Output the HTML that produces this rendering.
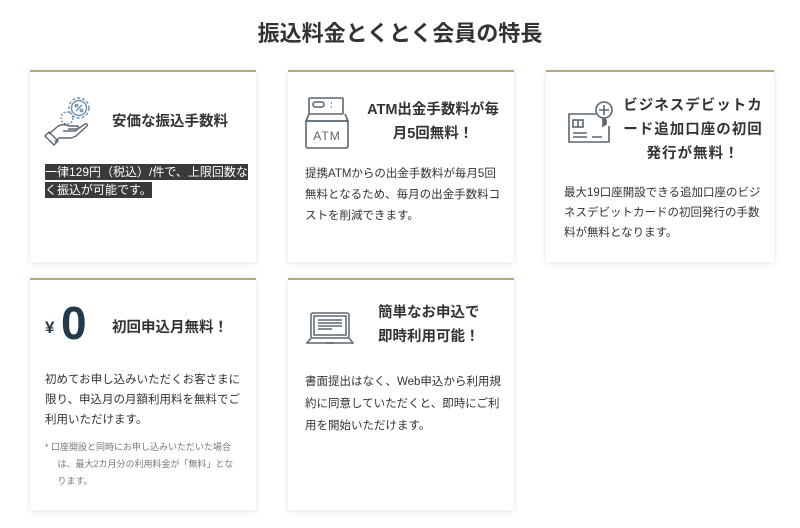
<!DOCTYPE html>
<html><head><meta charset="utf-8"><style>
*{margin:0;padding:0;box-sizing:border-box}
body{width:800px;height:528px;background:#fff;font-family:"Liberation Sans","Noto Sans CJK JP",sans-serif;color:#333;position:relative;overflow:hidden}
h1{position:absolute;top:16px;left:0;width:800px;text-align:center;font-size:22px;font-weight:bold;color:#333}
.card{position:absolute;background:#fff;border-top:2px solid #b9a87f;box-shadow:0 1px 6px rgba(0,0,0,.12)}
.t{position:absolute;font-size:14.5px;font-weight:bold;line-height:24px;color:#333}
.b{position:absolute;font-size:11.5px;line-height:21px;color:#333;white-space:nowrap}
.hl span{background:#3a3a3a;color:#fff;padding:1px 0}
.n{position:absolute;font-size:9px;line-height:17px;color:#777;white-space:nowrap}
svg{position:absolute}
</style></head><body>
<h1>振込料金とくとく会員の特長</h1>

<div class="card" style="left:30px;top:70px;width:226px;height:192px">
<svg style="left:13px;top:24px" width="56" height="50" viewBox="0 0 56 50" fill="none" stroke="#5b6670" stroke-width="1.4">
<circle cx="36" cy="12" r="7.5" stroke="#6a8fb0"/><circle cx="36" cy="12" r="10" stroke="#6a8fb0" stroke-dasharray="3 2"/>
<path d="M33 15l6-6" stroke="#6a8fb0"/><circle cx="33.5" cy="9.5" r="1.2" stroke="#6a8fb0"/><circle cx="38.5" cy="14.5" r="1.2" stroke="#6a8fb0"/>
<circle cx="24" cy="22" r="6" stroke="#6a8fb0" stroke-dasharray="2 1.5"/>
<path d="M6 38l8-7c4-3 8-3 12-1h8c2 0 2 3 0 3h-9M20 35h12l10-7c2-1 3 1 2 2l-11 10c-2 1-4 2-6 2H16l-4 4"/>
<path d="M2 40l9 9l4-4l-9-9z"/>
</svg>
<div class="t" style="left:82px;top:38px">安価な振込手数料</div>
<div class="b hl" style="left:15px;top:91px;line-height:18px;font-size:12px"><span>一律129円（税込）/件で、上限回数な</span><br><span>く振込が可能です。</span></div>
</div>

<div class="card" style="left:288px;top:70px;width:226px;height:192px">
<svg style="left:16px;top:24px" width="48" height="54" viewBox="0 0 48 54" fill="none" stroke="#5b6670" stroke-width="1.6">
<rect x="5" y="2" width="34" height="16" rx="1"/><rect x="9" y="6" width="11" height="5" rx="2.5"/><path d="M27 7h1M27 11h1"/>
<path d="M5 18l-3 7h42l-3-7"/><rect x="2" y="25" width="42" height="27" rx="2"/>
<text x="23" y="44" font-size="12" fill="#5b6670" stroke="none" text-anchor="middle" font-family="Liberation Sans" letter-spacing="1">ATM</text>
</svg>
<div class="t" style="left:70px;top:26px;width:150px;text-align:center">ATM出金手数料が毎<br>月5回無料！</div>
<div class="b" style="left:17px;top:92px">提携ATMからの出金手数料が毎月5回<br>無料となるため、毎月の出金手数料コ<br>ストを削減できます。</div>
</div>

<div class="card" style="left:546px;top:70px;width:228px;height:192px">
<svg style="left:20px;top:26px" width="52" height="50" viewBox="0 0 52 50" fill="none" stroke="#5b6670" stroke-width="1.6">
<path d="M30 16H3v28h40V28"/><circle cx="38" cy="12" r="8"/><path d="M38 7v10M33 12h10"/>
<rect x="7" y="22" width="10" height="7"/><path d="M12 22v7M7 35h14M7 39h14M26 39h10"/><path d="M37 20l3 2v4l-3 2z" fill="#5b6670"/>
</svg>
<div class="t" style="left:74px;top:22px;width:146px;text-align:center;letter-spacing:1px">ビジネスデビットカ<br>ード追加口座の初回<br>発行が無料！</div>
<div class="b" style="left:18px;top:111px;line-height:20px">最大19口座開設できる追加口座のビジ<br>ネスデビットカードの初回発行の手数<br>料が無料となります。</div>
</div>

<div class="card" style="left:30px;top:278px;width:226px;height:232px">
<div style="position:absolute;left:15px;top:38px;font-size:17px;font-weight:bold;color:#233a4c">¥</div>
<div style="position:absolute;left:31px;top:18px;font-size:46px;font-weight:bold;color:#233a4c;line-height:50px">0</div>
<div class="t" style="left:82px;top:36px">初回申込月無料！</div>
<div class="b" style="left:15px;top:90px;line-height:20px">初めてお申し込みいただくお客さまに<br>限り、申込月の月額利用料を無料でご<br>利用いただけます。</div>
<div class="n" style="left:15px;top:159px">* 口座開設と同時にお申し込みいただいた場合<br>&nbsp;&nbsp;&nbsp;&nbsp;&nbsp;は、最大2カ月分の利用料金が「無料」とな<br>&nbsp;&nbsp;&nbsp;&nbsp;&nbsp;ります。</div>
</div>

<div class="card" style="left:288px;top:278px;width:226px;height:232px">
<svg style="left:18px;top:30px" width="48" height="36" viewBox="0 0 48 36" fill="none" stroke="#5b6670" stroke-width="1.5">
<rect x="5" y="3" width="38" height="25" rx="2"/><rect x="8" y="6" width="32" height="19"/>
<path d="M12 10h24M12 13h24M12 16h24M12 19h14"/><path d="M5 28l-4 5h46l-4-5"/><path d="M20 33h8"/>
</svg>
<div class="t" style="left:90px;top:21px">簡単なお申込で<br>即時利用可能！</div>
<div class="b" style="left:17px;top:91px;line-height:22px">書面提出はなく、Web申込から利用規<br>約に同意していただくと、即時にご利<br>用を開始いただけます。</div>
</div>
</body></html>
